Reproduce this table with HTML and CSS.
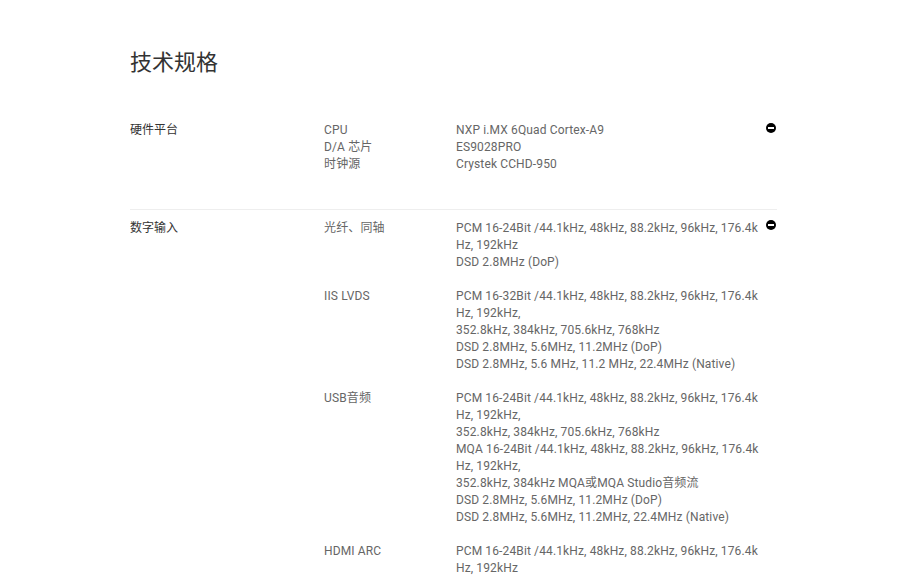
FILE: index.html
```html
<!DOCTYPE html>
<html lang="zh-CN">
<head>
<meta charset="utf-8">
<title>技术规格</title>
<link rel="stylesheet" href="styles.css">
</head>
<body>
<main class="specs">
  <h1 class="title">技术规格</h1>

  <section class="section">
    <div class="section-name">硬件平台</div>
    <div class="groups">
      <div class="group">
        <div class="keys">CPU<br>D/A 芯片<br>时钟源</div>
        <div class="vals">NXP i.MX 6Quad Cortex-A9<br>ES9028PRO<br>Crystek CCHD-950</div>
      </div>
    </div>
    <span class="toggle"></span>
  </section>

  <section class="section">
    <div class="section-name">数字输入</div>
    <div class="groups">
      <div class="group">
        <div class="keys">光纤、同轴</div>
        <div class="vals">PCM 16-24Bit /44.1kHz, 48kHz, 88.2kHz, 96kHz, 176.4kHz, 192kHz<br>DSD 2.8MHz (DoP)</div>
      </div>
      <div class="group">
        <div class="keys">IIS LVDS</div>
        <div class="vals">PCM 16-32Bit /44.1kHz, 48kHz, 88.2kHz, 96kHz, 176.4kHz, 192kHz,<br>352.8kHz, 384kHz, 705.6kHz, 768kHz<br>DSD 2.8MHz, 5.6MHz, 11.2MHz (DoP)<br>DSD 2.8MHz, 5.6 MHz, 11.2 MHz, 22.4MHz (Native)</div>
      </div>
      <div class="group">
        <div class="keys">USB音频</div>
        <div class="vals">PCM 16-24Bit /44.1kHz, 48kHz, 88.2kHz, 96kHz, 176.4kHz, 192kHz,<br>352.8kHz, 384kHz, 705.6kHz, 768kHz<br>MQA 16-24Bit /44.1kHz, 48kHz, 88.2kHz, 96kHz, 176.4kHz, 192kHz,<br>352.8kHz, 384kHz MQA或MQA Studio音频流<br>DSD 2.8MHz, 5.6MHz, 11.2MHz (DoP)<br>DSD 2.8MHz, 5.6MHz, 11.2MHz, 22.4MHz (Native)</div>
      </div>
      <div class="group">
        <div class="keys">HDMI ARC</div>
        <div class="vals">PCM 16-24Bit /44.1kHz, 48kHz, 88.2kHz, 96kHz, 176.4kHz, 192kHz</div>
      </div>
    </div>
    <span class="toggle"></span>
  </section>
</main>
</body>
</html>
```
FILE: styles.css
```css
html, body {
  margin: 0;
  padding: 0;
  background: #fff;
}
body {
  font-family: Roboto, "Noto Sans CJK SC", sans-serif;
  color: #666;
  font-size: 12px;
  line-height: 17px;
}
.specs {
  margin-left: 130px;
  width: 647px;
  padding-top: 48px;
}
.title {
  margin: 0 0 44px;
  font-size: 22px;
  line-height: 30px;
  font-weight: 400;
  color: #333;
}
.section {
  position: relative;
  display: flex;
  padding: 0 0 19px;
  border-bottom: 1px solid #eee;
}
.section + .section {
  padding-top: 10px;
}
.section-name {
  width: 194px;
  flex: none;
  color: #333;
}
.groups {
  flex: 1;
}
.group {
  display: flex;
  margin-bottom: 17px;
}
.keys {
  width: 132px;
  flex: none;
  letter-spacing: 0.13px;
}
.vals {
  width: 304px;
  word-break: break-all;
  letter-spacing: 0.13px;
}
.toggle {
  position: absolute;
  right: 1px;
  top: 1px;
  width: 10px;
  height: 10px;
  border-radius: 50%;
  background: #000;
}
.section + .section .toggle {
  top: 10px;
}
.toggle::after {
  content: "";
  position: absolute;
  left: 2px;
  right: 2px;
  top: 4px;
  height: 1.5px;
  background: #fff;
}
```
